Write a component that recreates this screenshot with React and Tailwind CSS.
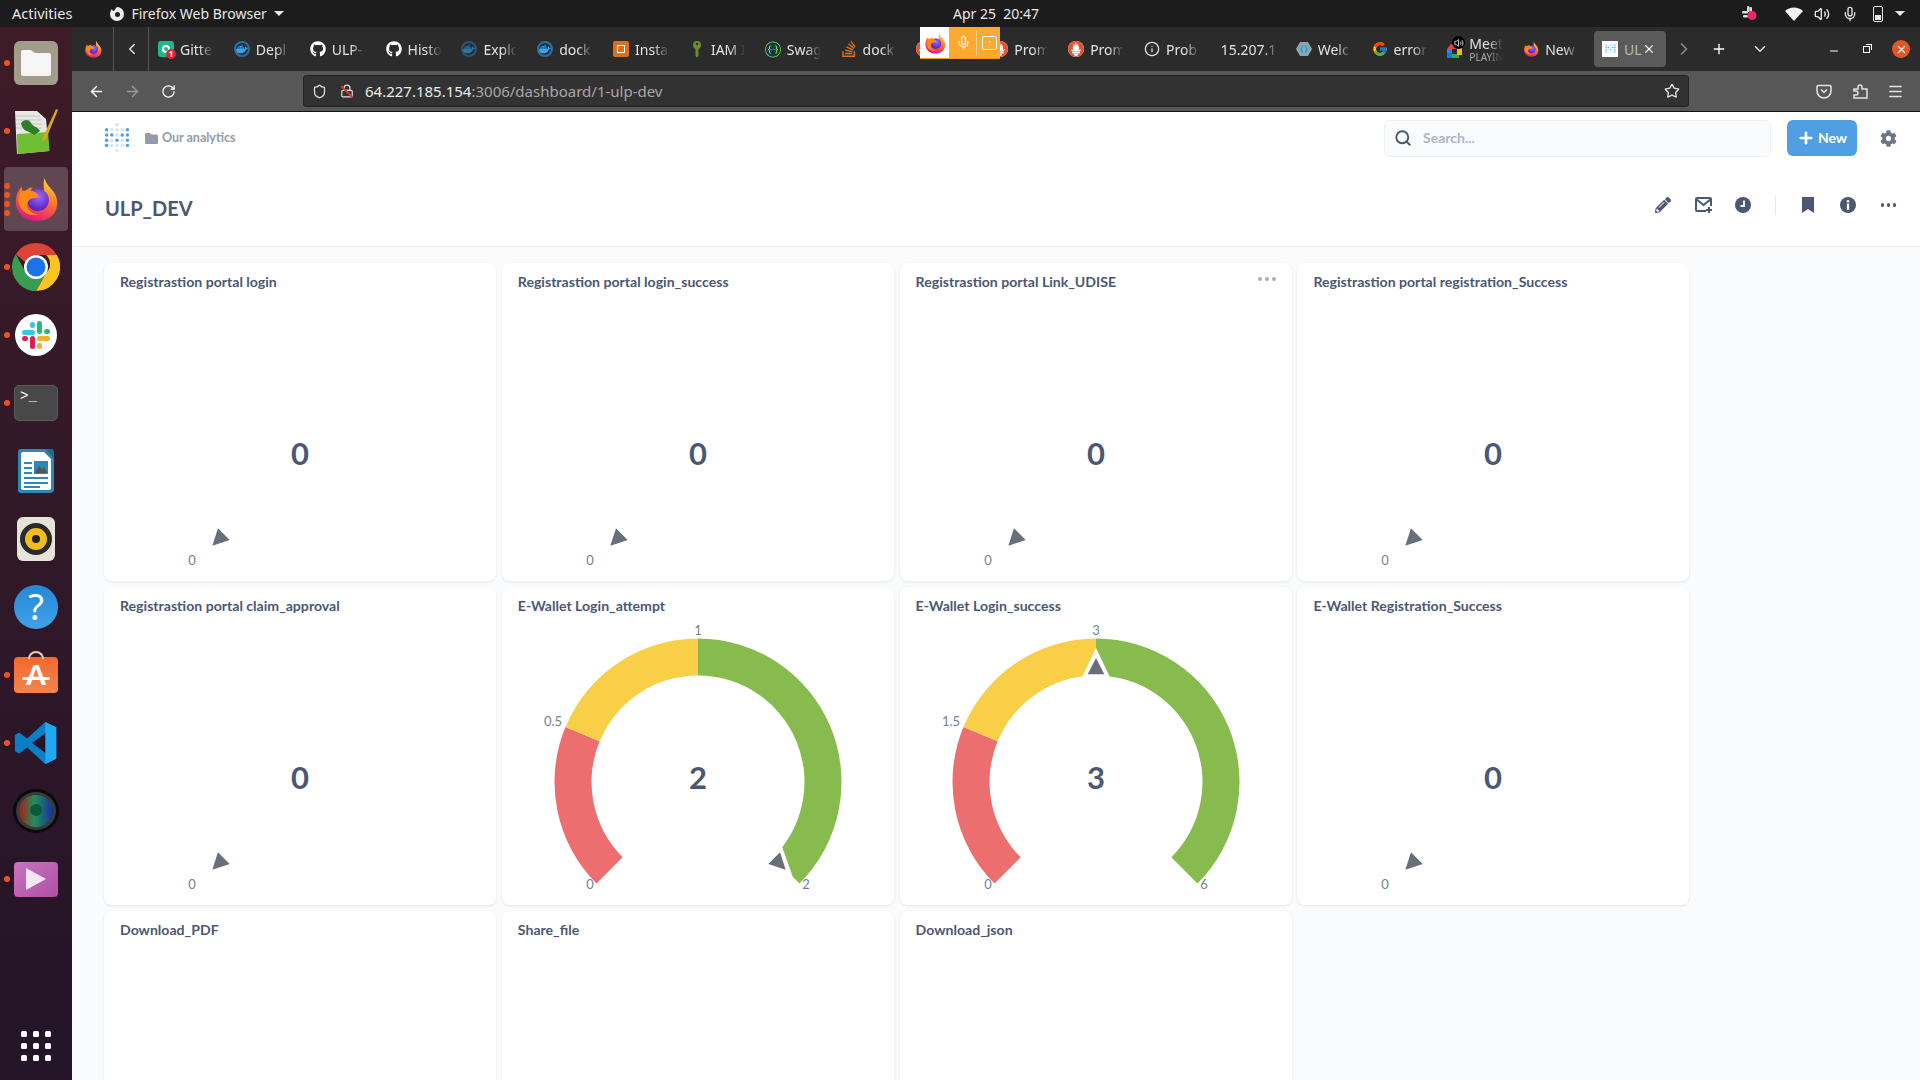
import { useId } from 'react';
import { FaGithub, FaPencilAlt, FaCog } from 'react-icons/fa';
import { FcGoogle } from 'react-icons/fc';
import { SiSwagger, SiStackoverflow, SiDocker, SiPrometheus } from 'react-icons/si';
import { Search, Plus, X, ChevronLeft, ChevronRight, ChevronDown, ArrowLeft, ArrowRight, RotateCw, Shield, Star, Menu, Info, Minus, Mic, Volume2, Lock } from 'lucide-react';

// ---- small brand drawings ----

function Firefox({ size = 18 }) {
  const id = useId();
  return (
    <svg width={size} height={size} viewBox="0 0 48 48">
      <defs>
        <linearGradient id={`${id}a`} x1="0.8" y1="0" x2="0.4" y2="1">
          <stop offset="0" stopColor="#ffe14a" />
          <stop offset="0.45" stopColor="#ff7a26" />
          <stop offset="1" stopColor="#e31587" />
        </linearGradient>
        <radialGradient id={`${id}b`} cx="0.55" cy="0.35" r="0.65">
          <stop offset="0" stopColor="#a06bff" />
          <stop offset="1" stopColor="#5220b8" />
        </radialGradient>
      </defs>
      <path d="M33 2c1 6 5 9 9 14 5 7 5 14 3 19-3 8-11 12-20 12C12 47 3 38 3 26c0-6 2-10 6-15 0 3 1 5 3 6 2-3 5-5 9-5-3 2-4 5-4 6 5-3 11-2 15 1 1-6-1-12 1-17z" fill={`url(#${id}a)`} />
      <circle cx="26" cy="25" r="11.500" fill={`url(#${id}b)`} />
      <path d="M8 17c3-2 9-3 13-1 6 2 7 6 3 7-4 0-8 1-9 6-1 5 3 10 11 11-10 3-19-4-20-13-1-4 1-8 2-10z" fill="#ff8a16" />
    </svg>
  );
}

function DockerRing({ size = 16, dim }) {
  return (
    <span className={`relative flex items-center justify-center rounded-full border-2 border-[#2f6f9c] bg-[#16324a] ${dim ? 'opacity-60' : ''}`} style={{ width: size, height: size }}>
      <SiDocker className="text-[#3aa3e3]" size={size - 4} />
    </span>
  );
}

function Gitter() {
  return (
    <span className="relative flex h-4 w-4 items-center justify-center rounded-[3px] bg-[#1fb78c]">
      <span className="h-2 w-2 rounded-full border-2 border-white" />
      <span className="absolute -bottom-0.5 -right-0.5 flex h-2.5 w-2.5 items-center justify-center rounded-full bg-[#e0262e] text-[8px] font-bold leading-none text-white">1</span>
    </span>
  );
}

function AwsBox() {
  return (
    <span className="flex h-4 w-4 items-center justify-center rounded-[2px] bg-[#d9711c]">
      <span className="h-2 w-2 border border-white" />
    </span>
  );
}

function KeyIcon() {
  return (
    <svg width="12" height="18" viewBox="0 0 12 18">
      <circle cx="6" cy="5" r="4" fill="#6c8f2c" />
      <circle cx="6" cy="4" r="1.2" fill="#2b2b2b" />
      <path d="M4.5 8h3v8l-1.5 1.5L4.5 16z" fill="#6c8f2c" />
    </svg>
  );
}

function PromIcon() {
  return (
    <span className="flex h-4 w-4 items-center justify-center rounded-full bg-white">
      <SiPrometheus className="text-[#e6522c]" size={16} />
    </span>
  );
}

function KeycloakIcon() {
  return (
    <svg width="16" height="14" viewBox="0 0 16 14">
      <path d="M4 0h8l4 7-4 7H4L0 7z" fill="#8fa3ad" />
      <path d="M6 3 4 7l2 4h1.5L5.8 7l1.7-4zM10 3l2 4-2 4H8.500l1.700-4-1.700-4z" fill="#15a5e6" />
    </svg>
  );
}

function MeetIcon() {
  return (
    <span className="relative block h-[18px] w-[18px]">
      <svg className="absolute bottom-0 left-0" width="15" height="14" viewBox="0 0 15 14">
        <rect x="0" y="5" width="5" height="5" fill="#2684fc" />
        <rect x="0" y="9" width="5" height="5" fill="#1a73e8" />
        <path d="M4 0h7v5H0z" fill="#ea4335" />
        <rect x="5" y="10" width="7" height="4" fill="#34a853" />
        <rect x="10" y="3" width="5" height="8" fill="#fbbc04" />
      </svg>
      <span className="absolute -right-0.5 -top-1 flex h-[13px] w-[13px] items-center justify-center rounded-full bg-black">
        <Volume2 size={10} className="text-white" />
      </span>
    </span>
  );
}

function MetabaseMark({ size = 16 }) {
  // the 5x5 dot grid with an M picked out, plus the dot above and below the centre column
  const dark = ['0,0', '4,0', '0,1', '1,1', '3,1', '4,1', '0,2', '2,2', '4,2', '0,3', '4,3'];
  const dots = [[2, -1], [2, 4]];
  for (let c = 0; c < 5; c++) for (let r = 0; r < 4; r++) dots.push([c, r]);
  return (
    <svg width={size} height={size * 1.22} viewBox="-0.5 -1.5 5 6.1">
      {dots.map(([c, r]) => (
        <circle key={`${c}-${r}`} cx={c} cy={r} r="0.33" fill={dark.includes(`${c},${r}`) ? '#509ee3' : '#d3e6f7'} />
      ))}
    </svg>
  );
}

// ---- ubuntu dock ----

function DockIcon({ dots = 0, active, children }) {
  return (
    <div className="relative flex h-[68px] items-center justify-center">
      {active && <div className="absolute inset-x-1 inset-y-[2px] rounded-[4px] bg-white/20" />}
      {dots > 0 && (
        <div className="absolute left-[4px] flex flex-col gap-[3px]">
          {Array.from({ length: dots }).map((_, i) => (
            <span key={i} className="h-[6px] w-[6px] rounded-full bg-[#e95420]" />
          ))}
        </div>
      )}
      <div className="relative">{children}</div>
    </div>
  );
}

function Dock() {
  return (
    <aside className="flex h-full w-[72px] shrink-0 flex-col bg-gradient-to-b from-[#3e1b27] to-[#231428] pt-[2px]">
      <DockIcon dots={1}>
        <div className="flex h-11 w-11 items-center justify-center rounded-md bg-[#a29c8d]">
          <svg width="34" height="30" viewBox="0 0 34 30">
            <path d="M2 4a2 2 0 0 1 2-2h8l4 3h14a2 2 0 0 1 2 2v19a2 2 0 0 1-2 2H4a2 2 0 0 1-2-2z" fill="#f7f6f4" />
          </svg>
        </div>
      </DockIcon>
      <DockIcon dots={1}>
        <svg width="46" height="48" viewBox="0 0 46 48">
          <path d="M2 4h22l9 8 3 32-32 3z" fill="#e8e8e4" />
          <path d="M3 9h24M3 13h25M3 17h26M3 21h26" stroke="#c4c8c8" strokeWidth="1" />
          <path d="M4 27 35 25l1.500 19-32 3z" fill="#6fbe35" />
          <path d="M8 16c3-4 8-4 10 0s6 3 9 8l-6 4c-4-4-12-3-13-12z" fill="#2f7d2b" />
          <path d="M30 30 43 2l2 1-12 29-4 3z" fill="#d9a520" />
        </svg>
      </DockIcon>
      <DockIcon dots={4} active>
        <Firefox size={46} />
      </DockIcon>
      <DockIcon dots={1}>
        <svg width="48" height="48" viewBox="0 0 48 48">
          <path d="M24 0a24 24 0 0 1 20.800 12H24a12 12 0 0 0-11 7L3.800 11A24 24 0 0 1 24 0z" fill="#db4437" />
          <path d="M44.800 12A24 24 0 0 1 24 48l10-18a12 12 0 0 0 0-18z" fill="#fcc41e" />
          <path d="M3.800 11 14 30a12 12 0 0 0 20 0L24 48A24 24 0 0 1 3.800 11z" fill="#3a9c52" />
          <circle cx="24" cy="24" r="12" fill="#fff" />
          <circle cx="24" cy="24" r="9.500" fill="#1a73e8" />
        </svg>
      </DockIcon>
      <DockIcon dots={1}>
        <svg width="42" height="42" viewBox="0 0 42 42">
          <circle cx="21" cy="21" r="21" fill="#fff" />
          <rect x="7" y="16" width="13" height="5" rx="2.500" fill="#36c5f0" />
          <rect x="15" y="8" width="5" height="6" rx="2.500" fill="#36c5f0" />
          <rect x="22" y="7" width="5" height="13" rx="2.500" fill="#2eb67d" />
          <rect x="29" y="15" width="6" height="5" rx="2.500" fill="#2eb67d" />
          <rect x="22" y="22" width="13" height="5" rx="2.500" fill="#ecb22e" />
          <rect x="22" y="29" width="5" height="6" rx="2.500" fill="#ecb22e" />
          <rect x="15" y="22" width="5" height="13" rx="2.500" fill="#e01e5a" />
          <rect x="7" y="22" width="6" height="5" rx="2.500" fill="#e01e5a" />
        </svg>
      </DockIcon>
      <DockIcon dots={1}>
        <div className="h-9 w-11 rounded-[5px] border border-[#5a5a5a] bg-[#484848] pl-[5px] pt-[3px] font-['Liberation_Mono',monospace] text-[14px] leading-[14px] text-white">&gt;_</div>
      </DockIcon>
      <DockIcon>
        <svg width="38" height="46" viewBox="0 0 38 46">
          <path d="M4 1h26l7 7v33a4 4 0 0 1-4 4H4a3 3 0 0 1-3-3V4a3 3 0 0 1 3-3z" fill="#2f87b3" />
          <path d="M6 4h21l7 7v29a2 2 0 0 1-2 2H6a2 2 0 0 1-2-2V6a2 2 0 0 1 2-2z" fill="#fff" />
          <path d="M28 1h6a3 3 0 0 1 3 3v7z" fill="#1f6c94" />
          <path d="M7 14h8v2H7zM7 19h8v2H7zM7 24h8v2H7zM7 29h24v2H7zM7 34h24v2H7zM7 38h16v2H7z" fill="#2f87b3" />
          <rect x="17" y="13" width="14" height="13" fill="#2f87b3" />
          <path d="M18 25l4-7 3 3 2-2 3 6z" fill="#555" />
        </svg>
      </DockIcon>
      <DockIcon>
        <div className="flex h-[44px] w-[38px] items-center justify-center rounded-md bg-[#e6e3d8]">
          <div className="flex h-8 w-8 items-center justify-center rounded-full border-[5px] border-[#2a2a2a] bg-[#f0bd1c]">
            <span className="h-2 w-2 rounded-full bg-[#222]" />
          </div>
        </div>
      </DockIcon>
      <DockIcon>
        <div className="flex h-11 w-11 items-center justify-center rounded-full bg-gradient-to-b from-[#2588d8] to-[#3fa2e6] font-['Noto_Sans',sans-serif] text-[36px] font-normal leading-none text-white">?</div>
      </DockIcon>
      <DockIcon dots={1}>
        <div className="relative flex h-[36px] w-11 items-center justify-center rounded-[4px] bg-gradient-to-b from-[#f2682a] to-[#f4854d] font-['Liberation_Sans',sans-serif] text-[30px] font-bold leading-none text-white">
          <span className="absolute -top-[6px] left-[14px] h-[8px] w-[16px] rounded-t-full border-2 border-b-0 border-[#f2c9a8]" />
          A
          <span className="absolute left-[8px] top-[20px] h-[3px] w-[28px] rounded-full bg-white" />
        </div>
      </DockIcon>
      <DockIcon dots={1}>
        <svg width="44" height="44" viewBox="0 0 100 100">
          <path d="M71 2 96 14v72L71 98 30 60 12 74 2 68V32l10-6 18 14z" fill="#0a7fc9" />
          <path d="M71 2 96 14v72L71 98z" fill="#22a7f0" />
          <path d="M71 28 41 50l30 22z" fill="#231428" />
        </svg>
      </DockIcon>
      <DockIcon>
        <svg width="46" height="44" viewBox="0 0 46 44">
          <defs>
            <linearGradient id="lens" x1="0" y1="0" x2="1" y2="0">
              <stop offset="0" stopColor="#a81c1c" />
              <stop offset="0.45" stopColor="#1f8f5a" />
              <stop offset="1" stopColor="#1a2f9f" />
            </linearGradient>
          </defs>
          <ellipse cx="23" cy="22" rx="23" ry="22" fill="#0b0b0b" />
          <ellipse cx="23" cy="22" rx="20" ry="19" fill="#3a3a3a" />
          <ellipse cx="23" cy="22" rx="17" ry="16" fill="url(#lens)" />
          <circle cx="23" cy="21" r="6" fill="#0d5a3a" />
        </svg>
      </DockIcon>
      <DockIcon dots={1}>
        <div className="flex h-[35px] w-11 items-center justify-center rounded-[4px] bg-gradient-to-br from-[#c774bf] to-[#b04fa6]">
          <svg width="22" height="24" viewBox="0 0 22 24"><path d="M1 1l20 11L1 23z" fill="#f6e6f4" /></svg>
        </div>
      </DockIcon>
      <div className="mt-auto mb-[19px] grid h-[30px] w-[30px] grid-cols-3 gap-[6px] self-center">
        {Array.from({ length: 9 }).map((_, i) => (
          <span key={i} className="h-[6px] w-[6px] rounded-[1.500px] bg-white" />
        ))}
      </div>
    </aside>
  );
}

// ---- firefox chrome ----

const tabs = [
  { icon: <Gitter />, text: 'Gitte' },
  { icon: <DockerRing />, text: 'Depl' },
  { icon: <FaGithub size={16} className="text-white" />, text: 'ULP-' },
  { icon: <FaGithub size={16} className="text-white" />, text: 'Histo' },
  { icon: <DockerRing dim />, text: 'Explo' },
  { icon: <DockerRing />, text: 'dock' },
  { icon: <AwsBox />, text: 'Insta' },
  { icon: <KeyIcon />, text: 'IAM I' },
  { icon: <SiSwagger size={17} className="rounded-full bg-[#173647] text-[#85ea2d]" />, text: 'Swag' },
  { icon: <SiStackoverflow size={16} className="text-[#e0701f]" />, text: 'dock' },
  { icon: <PromIcon />, text: 'Prom' },
  { icon: <PromIcon />, text: 'Prom' },
  { icon: <PromIcon />, text: 'Prom' },
  { icon: <Info size={16} className="text-[#e0e0e0]" />, text: 'Prob' },
  { text: '15.207.1' },
  { icon: <KeycloakIcon />, text: 'Welc' },
  { icon: <FcGoogle size={16} />, text: 'error' },
  { icon: <MeetIcon />, text: 'Meet', sub: 'PLAYIN' },
  { icon: <Firefox size={16} />, text: 'New' },
];

function Tab({ tab }) {
  return (
    <div className="flex h-full w-[75.85px] shrink-0 items-center gap-[6px] pl-[9px] text-[14px] text-[#e4e4e4]">
      {tab.icon && <span className="flex w-4 shrink-0 justify-center">{tab.icon}</span>}
      <div className={`whitespace-nowrap ${tab.icon ? 'w-[34px] [mask-image:linear-gradient(to_right,black_55%,transparent)]' : 'w-[60px] pl-[1px] [mask-image:linear-gradient(to_right,black_70%,transparent)]'}`}>
        {tab.sub ? (
          <div className="leading-[15px]">
            {tab.text}
            <div className="text-[10px] leading-[12px] text-[#aaaaaa]">{tab.sub}</div>
          </div>
        ) : tab.text}
      </div>
    </div>
  );
}

function TabBar() {
  return (
    <div className="relative flex h-[44px] shrink-0 items-center bg-[#2b2b2b]">
      <div className="flex h-full w-[42px] items-center justify-center border-r border-[#555]">
        <Firefox size={18} />
      </div>
      <div className="flex h-full w-[35px] items-center justify-center border-r border-[#555] pl-[2px]">
        <ChevronLeft size={18} className="text-[#e4e4e4]" />
      </div>
      <div className="flex h-full">
        {tabs.map((tab, i) => <Tab key={i} tab={tab} />)}
        <div className="ml-[4px] my-1 flex w-[72px] shrink-0 items-center gap-[6px] rounded-[4px] bg-[#5a5a5a] pl-2 text-[14px] text-[#b8b8b8]">
          <span className="flex h-4 w-4 shrink-0 items-center justify-center bg-white"><MetabaseMark size={11} /></span>
          <span className="w-[12px] whitespace-nowrap">UL</span>
          <X size={14} className="relative shrink-0 text-white" />
        </div>
      </div>
      <ChevronRight size={20} className="ml-[8px] shrink-0 text-[#8a8a8a]" />
      <Plus size={16} className="ml-[17px] shrink-0 text-white" />
      <ChevronDown size={18} className="ml-[24px] shrink-0 text-[#e4e4e4]" />
      <Minus size={12} className="ml-[59px] mt-1 shrink-0 text-white" />
      <span className="relative ml-[23px] h-[7px] w-[7px] shrink-0 border border-white bg-[#2b2b2b] before:absolute before:-right-[3px] before:-top-[3px] before:h-[6px] before:w-[6px] before:border-r before:border-t before:border-white" />
      <span className="ml-[22px] flex h-[18px] w-[18px] shrink-0 items-center justify-center rounded-full bg-[#e95420]">
        <X size={13} className="text-white" />
      </span>
      {/* screen sharing indicator floats over the tab strip */}
      <div className="absolute left-[848px] top-0 flex h-[32px] w-[80px] items-stretch border-b border-[#f09a1c] bg-[#ffa931]">
        <div className="flex w-[29px] items-center justify-center bg-white"><Firefox size={22} /></div>
        <div className="flex flex-1 items-center justify-center gap-[5px] pl-1">
          <Mic size={15} className="text-white" />
          <span className="h-[26px] w-px bg-[#ffd28a]" />
          <span className="flex h-[14px] w-[15px] items-center justify-center rounded-[2px] border border-white text-[9px] font-bold leading-none text-white">↑</span>
        </div>
      </div>
    </div>
  );
}

function Toolbar() {
  return (
    <div className="flex h-[41px] shrink-0 items-center border-b border-[#111] bg-[#575757]">
      <ArrowLeft size={17} className="ml-4 shrink-0 text-white" />
      <ArrowRight size={17} className="ml-[19px] shrink-0 text-[#999]" />
      <RotateCw size={15} className="ml-5 shrink-0 text-white" />
      <div className="ml-[127px] flex h-[32px] w-[1386px] shrink-0 items-center rounded-[3px] border border-[#222] bg-[#323232]">
        <Shield size={15} className="ml-[8px] shrink-0 text-[#e4e4e4]" />
        <span className="relative ml-[13px] shrink-0">
          <Lock size={14} className="text-[#e4e4e4]" />
          <span className="absolute left-[6px] top-0 h-[16px] w-[1.500px] -rotate-45 bg-[#e0392e]" />
        </span>
        <span className="ml-[11px] whitespace-nowrap text-[15px] text-[#ececec]">
          64.227.185.154<span className="text-[#a8a8a8]">:3006/dashboard/1-ulp-dev</span>
        </span>
        <Star size={16} className="ml-auto mr-[8px] shrink-0 text-[#e4e4e4]" />
      </div>
      <svg className="ml-[127px] shrink-0" width="16" height="16" viewBox="0 0 16 16" fill="none" stroke="#e4e4e4" strokeWidth="1.500">
        <path d="M2 2.500h12a1 1 0 0 1 1 1V8a7 7 0 0 1-14 0V3.500a1 1 0 0 1 1-1z" />
        <path d="m5 6.500 3 3 3-3" />
      </svg>
      <svg className="ml-[21px] shrink-0" width="16" height="18" viewBox="0 0 16 18" fill="none" stroke="#e4e4e4" strokeWidth="1.500">
        <path d="M1 7h4V5a2 2 0 0 1 4 0v2h5v9H1v-3h2a2 2 0 0 0 0-4H1z" />
      </svg>
      <Menu size={17} className="ml-[18px] shrink-0 text-[#e4e4e4]" />
    </div>
  );
}

// ---- metabase ----

function polar(r, deg) {
  const a = (deg * Math.PI) / 180;
  return [CX + r * Math.sin(a), CY - r * Math.cos(a)];
}

const CX = 196;
const CY = 167;
const OUTER = 143.5;
const INNER = 106.5;

function arcPath(from, to) {
  const [x1, y1] = polar(OUTER, from);
  const [x2, y2] = polar(OUTER, to);
  const [x3, y3] = polar(INNER, to);
  const [x4, y4] = polar(INNER, from);
  const large = to - from > 180 ? 1 : 0;
  return `M${x1} ${y1}A${OUTER} ${OUTER} 0 ${large} 1 ${x2} ${y2}L${x3} ${y3}A${INNER} ${INNER} 0 ${large} 0 ${x4} ${y4}Z`;
}

function Gauge({ value, mid, top, max, angle, arcs }) {
  return (
    <svg width="392" height="290" viewBox="0 0 392 290" className="block shrink-0">
      {arcs && (
        <>
          <path d={arcPath(-135, -67.5)} fill="#ed6e6e" />
          <path d={arcPath(-67.5, 0)} fill="#f9cf48" />
          <path d={arcPath(0, 135)} fill="#87bb4e" />
        </>
      )}
      <g transform={`translate(${CX} ${CY}) rotate(${angle})`}>
        <polygon points="0,-134 -14,-104.700 14,-104.700" fill="#fff" />
        <polygon points="0,-124 -8.300,-107.700 8.300,-107.700" fill="#696e7b" />
      </g>
      <g fontFamily="Lato, sans-serif" fontSize="13" fill="#74838f" textAnchor="middle">
        <text x={CX - 108} y={CY + 107}>0</text>
        {arcs && <text x={CX - 145} y={CY - 56}>{mid}</text>}
        {arcs && <text x={CX} y={CY - 147}>{top}</text>}
        {arcs && <text x={CX + 108} y={CY + 107}>{max}</text>}
      </g>
      <text x={CX} y={CY + 7} fontFamily="Lato, sans-serif" fontWeight="700" fontSize="31" fill="#4c5773" textAnchor="middle">{value}</text>
    </svg>
  );
}

function Card({ title, gauge, menu }) {
  return (
    <div className="relative h-[318px] overflow-hidden rounded-lg bg-white shadow-[0_1px_3px_rgba(0,0,0,0.09)]">
      <div className="h-[28px] pl-4 pt-[10px] text-[14.100px] font-bold leading-[18px] text-[#4c5773]">{title}</div>
      {menu && (
        <div className="absolute right-[16px] top-[14px] flex gap-[3px]">
          <span className="h-1 w-1 rounded-full bg-[#a9aeb9]" />
          <span className="h-1 w-1 rounded-full bg-[#a9aeb9]" />
          <span className="h-1 w-1 rounded-full bg-[#a9aeb9]" />
        </div>
      )}
      {gauge && <Gauge {...gauge} />}
    </div>
  );
}

const zero = { value: 0, angle: -135 };

const cards = [
  { title: 'Registrastion portal login', gauge: zero },
  { title: 'Registrastion portal login_success', gauge: zero },
  { title: 'Registrastion portal Link_UDISE', gauge: zero, menu: true },
  { title: 'Registrastion portal registration_Success', gauge: zero },
  { title: 'Registrastion portal claim_approval', gauge: zero },
  { title: 'E-Wallet Login_attempt', gauge: { value: 2, angle: 135, mid: '0.5', top: '1', max: '2', arcs: true } },
  { title: 'E-Wallet Login_success', gauge: { value: 3, angle: 0, mid: '1.5', top: '3', max: '6', arcs: true } },
  { title: 'E-Wallet Registration_Success', gauge: zero },
  { title: 'Download_PDF' },
  { title: 'Share_file' },
  { title: 'Download_json' },
];

function TopNav() {
  return (
    <div className="flex h-[52px] shrink-0 items-center pl-[32px]">
      <MetabaseMark size={26} />
      <svg className="ml-[15px] shrink-0" width="13" height="11" viewBox="0 0 13 11">
        <path d="M0 1.500A1.500 1.500 0 0 1 1.500 0H5l1.500 1.500h5A1.500 1.500 0 0 1 13 3v6.500A1.500 1.500 0 0 1 11.500 11h-10A1.500 1.500 0 0 1 0 9.500z" fill="#949aab" />
      </svg>
      <span className="ml-[4px] text-[12.500px] font-bold text-[#949aab]">Our analytics</span>
      <div className="ml-auto flex h-[37px] w-[387px] items-center rounded-md border border-[#eef0f3] bg-[#f9fbfc] pb-px">
        <Search size={18} strokeWidth={2.5} className="ml-[9px] shrink-0 text-[#4c5773]" />
        <span className="ml-[11px] text-[14px] font-bold text-[#b0b5c2]">Search...</span>
      </div>
      <button type="button" className="ml-[16px] flex h-[36px] w-[70px] items-center justify-center gap-[3px] rounded-md bg-[#509ee3] pb-px text-[14px] font-bold text-white">
        <Plus size={18} strokeWidth={3.5} />
        New
      </button>
      <FaCog size={17} className="ml-[23px] mr-[23px] shrink-0 text-[#6c7488]" />
    </div>
  );
}

function TitleBar() {
  return (
    <div className="flex h-[83px] shrink-0 items-start border-b border-[#eef0f3] pl-[33px]">
      <h1 className="mt-[31px] text-[20px] font-bold leading-[26px] text-[#4c5773]">ULP_DEV</h1>
      <div className="ml-auto mt-[31px] flex items-center pr-[24px] text-[#4c5773]">
        <FaPencilAlt size={16} />
        <svg className="ml-[24px]" width="17" height="16" viewBox="0 0 17 16" fill="none" stroke="currentColor" strokeWidth="2">
          <path d="M11 14H2a1 1 0 0 1-1-1V2a1 1 0 0 1 1-1h13a1 1 0 0 1 1 1v7" />
          <path d="m1 2 7.500 6L16 2" />
          <path d="M14 10v6M11 13h6" />
        </svg>
        <svg className="ml-[23px]" width="16" height="16" viewBox="0 0 16 16">
          <circle cx="8" cy="8" r="8" fill="currentColor" />
          <path d="M9 3.500V9H5.500" stroke="#fff" strokeWidth="1.800" fill="none" />
        </svg>
        <span className="ml-[24px] h-[20px] w-px bg-[#e4e7ec]" />
        <svg className="ml-[26px]" width="12" height="16" viewBox="0 0 12 16"><path d="M0 0h12v16l-6-4-6 4z" fill="currentColor" /></svg>
        <svg className="ml-[26px]" width="16" height="16" viewBox="0 0 16 16">
          <circle cx="8" cy="8" r="8" fill="currentColor" />
          <circle cx="8" cy="4.200" r="1.300" fill="#fff" />
          <rect x="6.900" y="6.500" width="2.200" height="6.300" fill="#fff" />
        </svg>
        <span className="ml-[25px] flex gap-[2.500px]">
          <span className="h-[3.500px] w-[3.500px] rounded-full bg-current" />
          <span className="h-[3.500px] w-[3.500px] rounded-full bg-current" />
          <span className="h-[3.500px] w-[3.500px] rounded-full bg-current" />
        </span>
      </div>
    </div>
  );
}

function SystemBar() {
  return (
    <div className="relative flex h-[27px] shrink-0 items-center bg-[#1c1c1c] font-['Noto_Sans',sans-serif] text-[14px] text-[#e8e8e8]">
      <span className="ml-3 text-[14.500px]">Activities</span>
      <svg className="ml-[37px]" width="16" height="16" viewBox="0 0 16 16">
        <path d="M8 1a7 7 0 1 1-7 7c0-2 1-4 2-5 0 1 1 2 2 2 1-2 2-3 3-4z" fill="#eee" />
        <circle cx="8.500" cy="8.500" r="2.500" fill="#1c1c1c" />
      </svg>
      <span className="ml-[6px]">Firefox Web Browser</span>
      <span className="ml-[7px] h-0 w-0 border-x-[5px] border-t-[5px] border-x-transparent border-t-[#e8e8e8]" />
      <span className="absolute left-[953px] whitespace-pre">Apr 25  20:47</span>
      <span className="ml-auto flex items-center">
        <svg width="15" height="15" viewBox="0 0 15 15">
          <rect x="0" y="5" width="6" height="2.500" rx="1.200" fill="#ddd" />
          <rect x="5" y="0" width="2.500" height="6" rx="1.200" fill="#ddd" />
          <rect x="7.500" y="1" width="2.500" height="5" rx="1.200" fill="#ddd" />
          <rect x="1" y="9" width="5" height="2.500" rx="1.200" fill="#ddd" />
          <circle cx="10" cy="9.500" r="4.500" fill="#f0256f" />
        </svg>
        <svg className="ml-[28px]" width="18" height="14" viewBox="0 0 18 14"><path d="M9 14 0 4a13 13 0 0 1 18 0z" fill="#f2f2f2" /></svg>
        <Volume2 size={16} className="ml-[11px] text-[#e8e8e8]" />
        <Mic size={16} className="ml-[12px] text-[#e8e8e8]" />
        <span className="relative ml-[15px] flex h-[16px] w-[10px] flex-col justify-end rounded-[2px] border border-[#e8e8e8] p-px">
          <span className="h-[5px] bg-[#e8e8e8]" />
        </span>
        <span className="ml-[12px] mr-[15px] h-0 w-0 border-x-[5px] border-t-[5px] border-x-transparent border-t-[#e8e8e8]" />
      </span>
    </div>
  );
}

export default function App() {
  return (
    <div className="flex h-screen w-screen flex-col overflow-hidden font-['Lato',sans-serif]">
      <SystemBar />
      <div className="flex min-h-0 flex-1">
        <Dock />
        <div className="flex min-w-0 flex-1 flex-col">
          <div className="font-['Noto_Sans',sans-serif]">
            <TabBar />
            <Toolbar />
          </div>
          <div className="flex min-h-0 flex-1 flex-col bg-white">
            <TopNav />
            <TitleBar />
            <div className="min-h-0 flex-1 overflow-hidden bg-[#f9fbfc] pl-[32px] pt-4">
              <div className="grid grid-cols-[repeat(4,392px)] gap-x-[5.800px] gap-y-[6px]">
                {cards.map((c) => <Card key={c.title} {...c} />)}
              </div>
            </div>
          </div>
        </div>
      </div>
    </div>
  );
}
